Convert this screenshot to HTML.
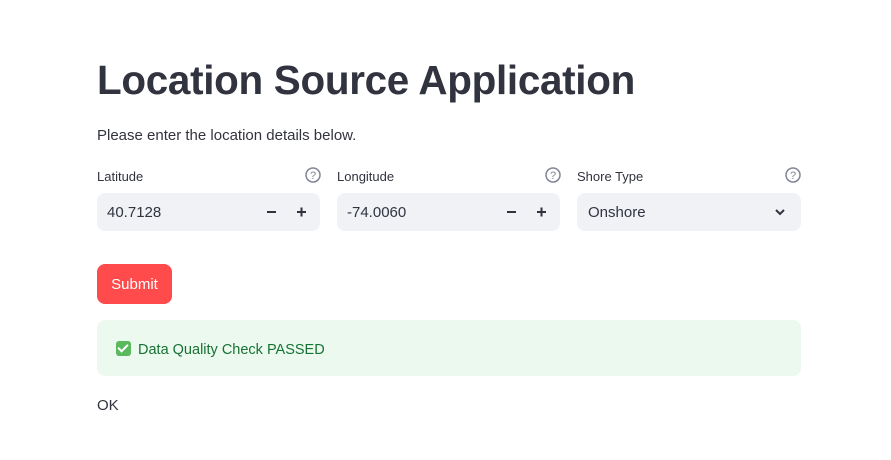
<!DOCTYPE html>
<html><head><meta charset="utf-8"><style>
*{box-sizing:border-box;margin:0;padding:0}
body{width:891px;height:460px;background:#fff;font-family:"Liberation Sans",sans-serif;color:#31333f;position:relative;overflow:hidden}
h1{position:absolute;left:97px;top:57px;font-size:40.4px;font-weight:700;letter-spacing:-0.3px;color:#31333f}
.p{position:absolute;left:97px;top:127px;font-size:15px}
.lbl{position:absolute;top:169px;font-size:13px}
.q{position:absolute;top:167px;width:16px;height:16px}
.box{position:absolute;top:193px;height:38px;width:223px;background:#f0f2f6;border-radius:8px;font-size:15px;padding:11px 0 0 10px}
.pm{position:absolute;left:167px;top:12px}
.btn{position:absolute;left:97px;top:264px;width:75px;height:40px;background:#ff4b4b;border-radius:8px;color:#fff;font-size:15px;text-align:center;line-height:42px}
.ok{position:absolute;left:97px;top:320px;width:704px;height:56px;background:#ebf9ee;border-radius:8px;color:#177233;font-size:14.5px;padding:21px 0 0 19px}
.chk{display:inline-block;width:15px;height:15px;background:#5cb85c;border-radius:3px;vertical-align:-2px;margin-right:7px;position:relative}
.chk:after{content:"";position:absolute;left:4px;top:1px;width:4px;height:8px;border:solid #fff;border-width:0 2px 2px 0;transform:rotate(45deg)}
.t{position:absolute;left:97px;top:397px;font-size:15px}
</style></head><body>
<h1>Location Source Application</h1>
<div class="p">Please enter the location details below.</div>
<div class="lbl" style="left:97px">Latitude</div>
<div class="lbl" style="left:337px">Longitude</div>
<div class="lbl" style="left:577px">Shore Type</div>
<svg class="q" style="left:305px" viewBox="0 0 16 16"><circle cx="8" cy="8" r="7" fill="none" stroke="#808495" stroke-width="1.5"/><text x="8" y="12" font-size="11" text-anchor="middle" fill="#808495" font-family="Liberation Sans">?</text></svg>
<svg class="q" style="left:545px" viewBox="0 0 16 16"><circle cx="8" cy="8" r="7" fill="none" stroke="#808495" stroke-width="1.5"/><text x="8" y="12" font-size="11" text-anchor="middle" fill="#808495" font-family="Liberation Sans">?</text></svg>
<svg class="q" style="left:785px" viewBox="0 0 16 16"><circle cx="8" cy="8" r="7" fill="none" stroke="#808495" stroke-width="1.5"/><text x="8" y="12" font-size="11" text-anchor="middle" fill="#808495" font-family="Liberation Sans">?</text></svg>
<div class="box" style="left:97px">40.7128<svg class="pm" width="44" height="14" viewBox="0 0 44 14"><path d="M3 7h9M33 7h9M37.5 2.5v9" stroke="#31333f" stroke-width="2"/></svg></div>
<div class="box" style="left:337px">-74.0060<svg class="pm" width="44" height="14" viewBox="0 0 44 14"><path d="M3 7h9M33 7h9M37.5 2.5v9" stroke="#31333f" stroke-width="2"/></svg></div>
<div class="box" style="left:577px;width:224px;padding-left:11px">Onshore
<svg style="position:absolute;left:197px;top:14px" width="12" height="10" viewBox="0 0 12 10"><path d="M2 3l4 4 4-4" fill="none" stroke="#31333f" stroke-width="2"/></svg></div>
<div class="btn">Submit</div>
<div class="ok"><span class="chk"></span>Data Quality Check PASSED</div>
<div class="t">OK</div>
</body></html>
